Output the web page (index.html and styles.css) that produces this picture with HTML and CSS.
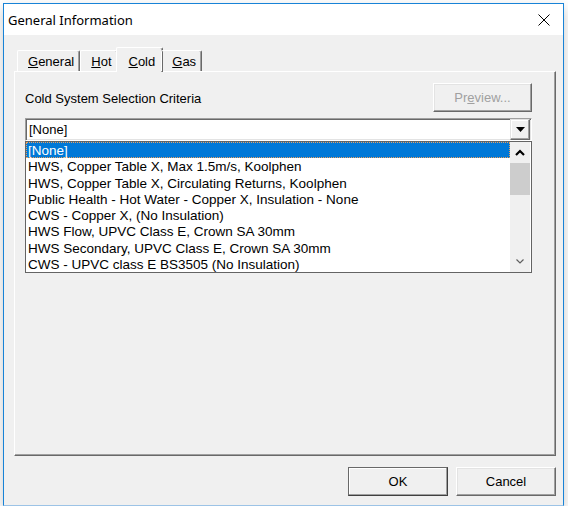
FILE: index.html
```html
<!DOCTYPE html>
<html lang="en">
<head>
    <meta charset="UTF-8">
    <title>General Information</title>
    <link rel="stylesheet" href="styles.css">
</head>
<body>
    <div class="dialog">
        <div class="titlebar">
            <span class="title">General Information</span>
            <svg class="close" width="12" height="12" viewBox="0 0 12 12">
                <path d="M0.5 0.5 L11.5 11.5 M11.5 0.5 L0.5 11.5" stroke="#000" stroke-width="1" fill="none"/>
            </svg>
        </div>
        <div class="client">
            <div class="tabs">
                <div class="tab"><u>G</u>eneral</div>
                <div class="tab"><u>H</u>ot</div>
                <div class="tab active"><u>C</u>old</div>
                <div class="tab"><u>G</u>as</div>
            </div>
            <div class="panel">
                <div class="criteria">
                    <span class="label">Cold System Selection Criteria</span>
                    <button class="btn preview" disabled>Pr<u>e</u>view...</button>
                </div>
                <div class="combo">
                    <span class="combo-text">[None]</span>
                    <span class="drop">
                        <svg width="9" height="5" viewBox="0 0 9 5"><path d="M0 0 H9 L4.5 5 Z" fill="#000"/></svg>
                    </span>
                </div>
                <div class="listbox">
                    <ul class="items">
                        <li class="selected">[None]</li>
                        <li>HWS, Copper Table X, Max 1.5m/s, Koolphen</li>
                        <li>HWS, Copper Table X, Circulating Returns, Koolphen</li>
                        <li>Public Health - Hot Water - Copper X, Insulation - None</li>
                        <li>CWS - Copper X, (No Insulation)</li>
                        <li>HWS Flow, UPVC Class E, Crown SA 30mm</li>
                        <li>HWS Secondary, UPVC Class E, Crown SA 30mm</li>
                        <li>CWS - UPVC class E BS3505 (No Insulation)</li>
                    </ul>
                    <div class="vscroll">
                        <div class="arrow">
                            <svg width="10" height="7" viewBox="0 0 10 7"><path d="M1 6 L5 2 L9 6" stroke="#000" stroke-width="2.2" fill="none"/></svg>
                        </div>
                        <div class="track"><div class="thumb"></div></div>
                        <div class="arrow">
                            <svg width="10" height="7" viewBox="0 0 10 7"><path d="M1.5 1.5 L5 5 L8.5 1.5" stroke="#606060" stroke-width="1.2" fill="none"/></svg>
                        </div>
                    </div>
                </div>
            </div>
            <div class="actions">
                <button class="btn default">OK</button>
                <button class="btn">Cancel</button>
            </div>
        </div>
    </div>
</body>
</html>
```

FILE: styles.css
```css
body {
    margin: 0;
    background: #ffffff;
    font-family: "Liberation Sans", Arial, sans-serif;
    font-size: 13px;
    color: #000;
}
.dialog {
    margin: 3px 0 0 3px;
    width: 561px;
    height: 503px;
    box-sizing: border-box;
    border: 1px solid #1883d7;
    border-bottom-color: #9cc3e6;
    background: #f0f0f0;
    display: flex;
    flex-direction: column;
    box-shadow: 0 5px 12px rgba(0,0,0,0.22);
}
.titlebar {
    height: 31px;
    background: #fff;
    display: flex;
    align-items: center;
    justify-content: space-between;
    padding: 0 13px 0 4px;
}
.title {
    font-family: "Noto Sans", "Open Sans", sans-serif;
    font-size: 13px;
}
.close {
    display: block;
    margin-top: 1px;
}
.client {
    flex: 1;
    padding: 12px 7px 0 10px;
    display: flex;
    flex-direction: column;
}
.tabs {
    display: flex;
    align-items: flex-end;
    padding-left: 3px;
    height: 25px;
    position: relative;
    z-index: 1;
    margin-bottom: -1px;
}
.tab {
    height: 20px;
    line-height: 22px;
    padding: 0 5px 0 10px;
    border: 1px solid;
    border-color: #fff #696969 transparent #fff;
    border-bottom: none;
    border-radius: 2px 2px 0 0;
    box-shadow: inset -1px 0 #a0a0a0;
    margin-bottom: 1px;
}
.tab.active {
    height: 22px;
    line-height: 23px;
    padding: 2px 7px 0 12px;
    margin: 0 -2px;
    background: #f0f0f0;
}
.panel {
    height: 385px;
    box-sizing: border-box;
    border: 1px solid;
    border-color: #fff #696969 #696969 #fff;
    box-shadow: inset -1px -1px #a0a0a0;
    padding: 11px 23px 0 10px;
}
.criteria {
    display: flex;
    justify-content: space-between;
    align-items: center;
    height: 29px;
}
.label {
    padding-top: 1px;
}
.btn {
    font-family: "Liberation Sans", Arial, sans-serif;
    font-size: 13px;
    color: #000;
    background: #f0f0f0;
    width: 100px;
    height: 29px;
    border: 1px solid;
    border-color: #fff #696969 #696969 #fff;
    box-shadow: inset -1px -1px #a0a0a0, inset 1px 1px #e3e3e3;
    padding: 0;
}
.preview {
    width: 99px;
    color: #a0a0a0;
}
.combo {
    margin-top: 6px;
    height: 23px;
    box-sizing: border-box;
    border: 1px solid;
    border-color: #a0a0a0 #fff #fff #a0a0a0;
    box-shadow: inset 1px 1px #696969, inset -1px -1px #e3e3e3;
    background: #fff;
    display: flex;
    align-items: center;
    justify-content: space-between;
    padding: 0 1px 0 3px;
}
.drop {
    width: 20px;
    height: 21px;
    box-sizing: border-box;
    background: #f0f0f0;
    border: 1px solid;
    border-color: #e3e3e3 #696969 #696969 #e3e3e3;
    box-shadow: inset -1px -1px #a0a0a0, inset 1px 1px #fff;
    display: flex;
    align-items: center;
    justify-content: center;
}
.drop svg {
    display: block;
}
.listbox {
    width: 507px;
    height: 132px;
    box-sizing: border-box;
    border: 1px solid #646464;
    background: #fff;
    display: flex;
}
.items {
    list-style: none;
    margin: 0;
    padding: 0;
    flex: 1;
    font-size: 13.5px;
}
.items li {
    box-sizing: border-box;
    height: 16.25px;
    padding: 2px 0 0 2px;
    line-height: 14.25px;
    white-space: nowrap;
}
.items li.selected {
    background: #0078d7;
    color: #fff;
    outline: 1px dotted #e8a060;
    outline-offset: -1px;
}
.vscroll {
    width: 20px;
    margin-right: 1px;
    background: #f0f0f0;
    display: flex;
    flex-direction: column;
}
.arrow {
    height: 21px;
    display: flex;
    align-items: center;
    justify-content: center;
}
.track {
    flex: 1;
}
.thumb {
    height: 32px;
    background: #cdcdcd;
}
.actions {
    display: flex;
    justify-content: flex-end;
    gap: 8px;
    padding-top: 11px;
}
.actions .btn {
    width: 100px;
}
.btn.default {
    border-color: #696969 #404040 #404040 #696969;
    box-shadow: inset -1px -1px #a0a0a0, inset 1px 1px #fff;
}
```
